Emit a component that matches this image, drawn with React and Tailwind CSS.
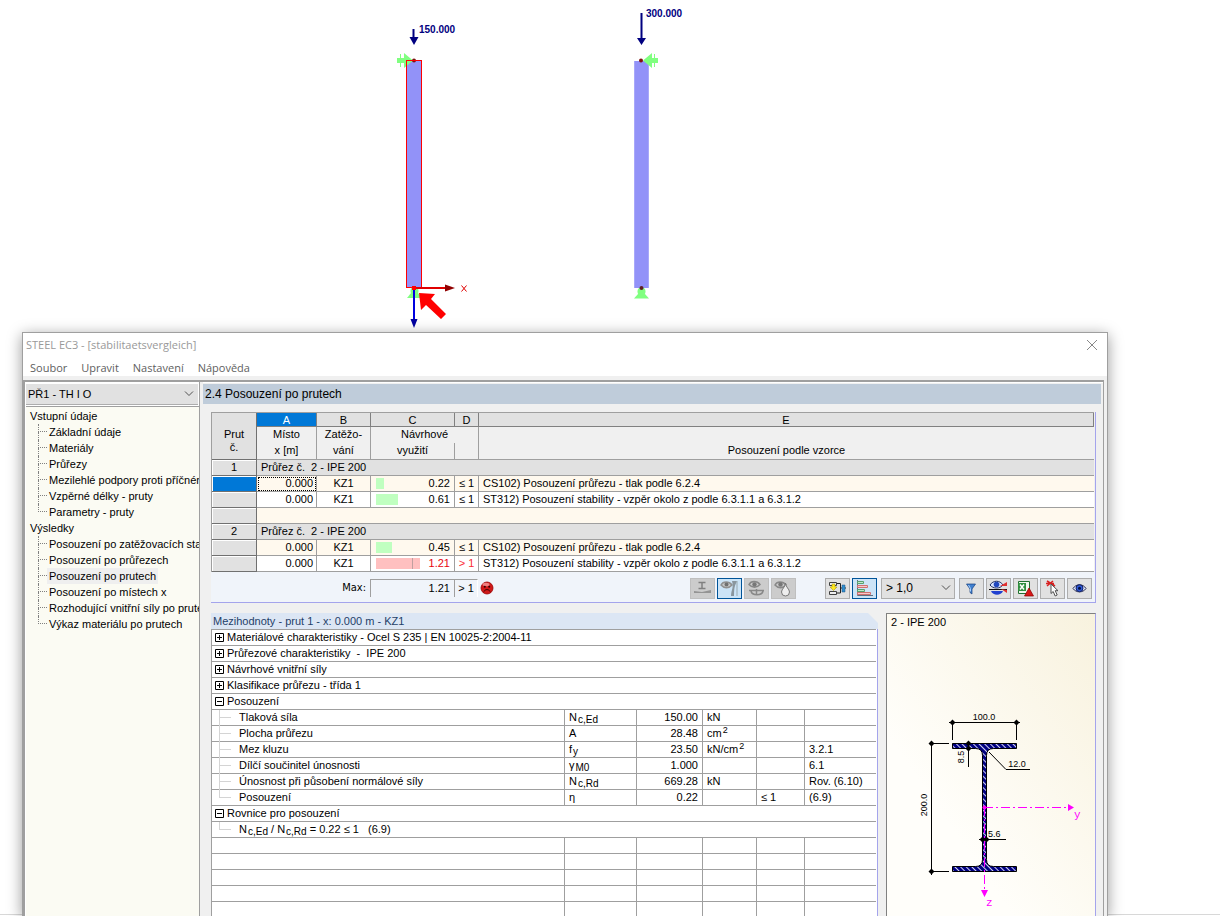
import { useState } from 'react';

const TREE = [
  {
    label: 'Vstupní údaje',
    items: [
      'Základní údaje',
      'Materiály',
      'Průřezy',
      'Mezilehlé podpory proti příčném',
      'Vzpěrné délky - pruty',
      'Parametry - pruty',
    ],
  },
  {
    label: 'Výsledky',
    items: [
      'Posouzení po zatěžovacích stav',
      'Posouzení po průřezech',
      'Posouzení po prutech',
      'Posouzení po místech x',
      'Rozhodující vnitřní síly po prute',
      'Výkaz materiálu po prutech',
    ],
  },
];

const ROWS = [
  { group: '1', title: 'Průřez č.  2 - IPE 200' },
  { x: '0.000', lc: 'KZ1', ratio: 0.22, text: 'CS102) Posouzení průřezu - tlak podle 6.2.4', selected: true },
  { x: '0.000', lc: 'KZ1', ratio: 0.61, text: 'ST312) Posouzení stability - vzpěr okolo z podle 6.3.1.1 a 6.3.1.2' },
  { blank: true },
  { group: '2', title: 'Průřez č.  2 - IPE 200' },
  { x: '0.000', lc: 'KZ1', ratio: 0.45, text: 'CS102) Posouzení průřezu - tlak podle 6.2.4' },
  { x: '0.000', lc: 'KZ1', ratio: 1.21, text: 'ST312) Posouzení stability - vzpěr okolo z podle 6.3.1.1 a 6.3.1.2' },
];

const CLOSED = [
  'Materiálové charakteristiky - Ocel S 235 | EN 10025-2:2004-11',
  'Průřezové charakteristiky  -  IPE 200',
  'Návrhové vnitřní síly',
  'Klasifikace průřezu - třída 1',
];

const VALUES = [
  { name: 'Tlaková síla', sym: 'N', sub: 'c,Ed', value: '150.00', unit: 'kN' },
  { name: 'Plocha průřezu', sym: 'A', value: '28.48', unit: 'cm', sup: '2' },
  { name: 'Mez kluzu', sym: 'f', sub: 'y', value: '23.50', unit: 'kN/cm', sup: '2', ref: '3.2.1' },
  { name: 'Dílčí součinitel únosnosti', sym: 'γ', sub: 'M0', value: '1.000', ref: '6.1' },
  { name: 'Únosnost při působení normálové síly', sym: 'N', sub: 'c,Rd', value: '669.28', unit: 'kN', ref: 'Rov. (6.10)' },
  { name: 'Posouzení', sym: 'η', value: '0.22', cond: '≤ 1', ref: '(6.9)' },
];

function Model() {
  return (
    <svg width="700" height="332" className="block shrink-0" aria-label="Model">
      {/* left member */}
      <rect x="406.500" y="60.500" width="15" height="227" fill="#9292f8" stroke="#ff0000" />
      <g fill="#80ff80">
        <path d="M397 58h7v-5l9 7.500-9 7.500v-5h-7z" />
        <path d="M400 54h1v13h-1z" />
        <path d="M411 293h7l4 5h-15z" />
        <circle cx="414.500" cy="291" r="4" />
      </g>
      <path d="M412.500 29h2v8h4l-4.500 8-4.500-8h3z" fill="#000080" />
      <circle cx="414" cy="60.500" r="2" fill="#801010" />
      <path d="M406 60.500h16M406.500 60v8" stroke="#ff0000" />
      <path d="M415 288h32" stroke="#e00000" strokeWidth="2" />
      <path d="M445 284.500l10 3.500-10 3.500z" fill="#900000" />
      <path d="M414 289v33" stroke="#0000e0" strokeWidth="2" />
      <path d="M410.500 319h7l-3.500 9z" fill="#0000a0" />
      <rect x="412" y="286" width="4" height="4" fill="#ff0000" />
      <path d="M419 293l16 1-4 5 15 15-5 5-15-14-5 5z" fill="#ff0000" />
      <text x="419" y="33" className="fill-[#000080] text-[10px] font-bold">150.000</text>
      <path d="M461.500 285.500l5 6m0-6l-5 6" stroke="#e00000" />

      {/* right member */}
      <rect x="634" y="61" width="15" height="227" fill="#9292f8" />
      <path d="M634.500 61v227m14 0v-227" stroke="#a8a8fa" />
      <g fill="#80ff80">
        <path d="M658 58h-6v-5l-9 7.500 9 7.500v-5h6z" />
        <path d="M654 54h1v13h-1z" />
        <path d="M638 294h7l4 4.500h-15z" />
        <circle cx="641.500" cy="291.500" r="4" />
      </g>
      <circle cx="641" cy="60.500" r="2" fill="#801010" />
      <circle cx="641.500" cy="288" r="2" fill="#602020" />
      <path d="M640.500 13h2v25h3.500l-4.500 7-4.500-7h3.500z" fill="#000080" />
      <text x="646" y="17" className="fill-[#000080] text-[10px] font-bold">300.000</text>
    </svg>
  );
}

/* Branch lines in front of a tree item */
function Branch({ last, dotted }) {
  const line = dotted ? 'border-dotted border-[#808080]' : 'border-[#d4d4d4]';
  return (
    <span className={`flex flex-col shrink-0 h-4 ${dotted ? 'w-[9px]' : 'w-3'}`}>
      <span className={`h-2 border-l border-b ${line}`} />
      <span className={`h-2 ${last ? '' : 'border-l'} ${line}`} />
    </span>
  );
}

function Chevron() {
  return (
    <svg width="10" height="6" viewBox="0 0 10 6" fill="none" stroke="#505050" className="pointer-events-none absolute right-1 top-1/2 -translate-y-1/2">
      <path d="M1 .5l4 4 4-4" />
    </svg>
  );
}

function Sidebar() {
  const [active, setActive] = useState('Posouzení po prutech');
  return (
    <aside className="flex flex-col w-[177px] shrink-0 border-l-2 border-r border-[#9f9f9f] bg-white pt-[2px]">
      <div className="relative mx-px h-[21px] shrink-0 border-b border-[#adadad]">
        <select aria-label="Případ" className="block w-full h-5 appearance-none bg-[#e1e1e1] pl-[2px] pr-5 text-black">
          <option>PŘ1 - TH I O</option>
        </select>
        <Chevron />
      </div>
      <nav className="flex-1 min-h-0 mt-px ml-px pt-px border-t border-[#9f9f9f] bg-[#fbfbf3] overflow-hidden">
        {TREE.map((section) => (
          <div key={section.label}>
            <div className="pl-1 leading-4">{section.label}</div>
            <ul className="pl-3">
              {section.items.map((item, i) => (
                <li key={item} className="flex h-4">
                  <Branch dotted last={i === section.items.length - 1} />
                  <button
                    onClick={() => setActive(item)}
                    className={`px-[2px] leading-4 whitespace-nowrap ${active === item ? 'bg-[#efefef]' : ''}`}
                  >
                    {item}
                  </button>
                </li>
              ))}
            </ul>
          </div>
        ))}
      </nav>
    </aside>
  );
}

function ResultsTable() {
  const letter = 'h-[14px] p-0 font-normal leading-[12px] border-r border-b border-[#808080]';
  const label = 'h-4 p-0 align-top font-normal leading-[14px] bg-[#f0f0f0] border-[#9f9f9f]';
  const label2 = 'h-[17px] p-0 align-top font-normal leading-[15px] border-b bg-[#f0f0f0] border-[#9f9f9f]';
  const rowHead = 'h-4 p-0 font-normal border-r border-b border-[#707070]';
  const cell = 'h-4 py-0 border-r border-b border-[#9f9f9f]';
  return (
    <table className="w-full table-fixed border-separate border-spacing-0 border-t border-l border-[#9f9f9f] leading-[15px]">
      <colgroup>
        <col className="w-[45px]" />
        <col className="w-[60px]" />
        <col className="w-[54px]" />
        <col className="w-[84px]" />
        <col className="w-[24px]" />
        <col />
      </colgroup>
      <thead>
        <tr>
          <th rowSpan={3} className="p-0 pb-[5px] align-bottom font-normal leading-[13px] border-r border-b border-[#707070] bg-[#e1e1e1]">
            Prut<br />č.
          </th>
          <th className={`${letter} bg-[#0078d7] text-white`}>A</th>
          <th className={`${letter} bg-[#e1e1e1]`}>B</th>
          <th className={`${letter} bg-[#e1e1e1]`}>C</th>
          <th className={`${letter} bg-[#e1e1e1]`}>D</th>
          <th className={`${letter} bg-[#e1e1e1]`}>E</th>
        </tr>
        <tr>
          <th className={`${label} border-r`}>Místo</th>
          <th className={`${label} border-r`}>Zatěžo-</th>
          <th colSpan={2} className={`${label} border-r`}>Návrhové</th>
          <th className={label} />
        </tr>
        <tr>
          <th className={`${label2} border-r`}>x [m]</th>
          <th className={`${label2} border-r`}>vání</th>
          <th className={`${label2} border-r`}>využití</th>
          <th className={`${label2} border-r`} />
          <th className={label2}>Posouzení podle vzorce</th>
        </tr>
      </thead>
      <tbody>
        {ROWS.map((row, i) => {
          if (row.blank) {
            return (
              <tr key={i}>
                <th className={`${rowHead} bg-[#e1e1e1] shadow-[inset_1px_1px_0_#fff]`} />
                <td colSpan={5} className="h-4 p-0 border-b border-[#9f9f9f] bg-[#fff9ee]" />
              </tr>
            );
          }
          if (row.group) {
            return (
              <tr key={i}>
                <th className={`${rowHead} bg-[#e1e1e1] shadow-[inset_1px_1px_0_#fff]`}>{row.group}</th>
                <td colSpan={5} className="h-4 py-0 px-1 whitespace-pre border-b border-[#9f9f9f] bg-[#e1e1e1]">{row.title}</td>
              </tr>
            );
          }
          const over = row.ratio > 1;
          return (
            <tr key={i} className={i === 1 || i === 5 ? 'bg-[#fff9ee]' : 'bg-white'}>
              <th className={`${rowHead} shadow-[inset_1px_1px_0_#fff] ${row.selected ? 'bg-[#0078d7]' : 'bg-[#e1e1e1]'}`} />
              <td className={`${cell} pr-[3px] text-right ${row.selected ? 'outline outline-dotted outline-black -outline-offset-2' : ''}`}>{row.x}</td>
              <td className={`${cell} px-0 text-center`}>{row.lc}</td>
              <td className={`${cell} pl-[5px] pr-1`}>
                <div className="flex items-center justify-between">
                  <span className={`flex h-[11px] ${over ? 'bg-[#ffc0c0]' : 'bg-[#c0ffc0]'}`} style={{ width: Math.round(row.ratio * 36) }}>
                    {over && <span className="ml-9 w-px bg-[#c0a0a0]" />}
                  </span>
                  <span className={over ? 'text-red-600' : ''}>{row.ratio.toFixed(2)}</span>
                </div>
              </td>
              <td className={`${cell} px-0 text-center ${over ? 'text-red-500' : ''}`}>{over ? '> 1' : '≤ 1'}</td>
              <td className="h-4 py-0 px-1 whitespace-nowrap border-b border-[#9f9f9f]">{row.text}</td>
            </tr>
          );
        })}
      </tbody>
    </table>
  );
}

function ToolButton({ label, state, children }) {
  const style = {
    disabled: 'bg-[#cccccc] border-[#bfbfbf]',
    on: 'bg-[#cce4f7] border-[#005499]',
  }[state] || 'bg-[#e1e1e1] border-[#adadad]';
  return (
    <button aria-label={label} disabled={state === 'disabled'} className={`flex items-center justify-center w-[25px] h-[21px] shrink-0 border ${style}`}>
      <svg width="19" height="17" viewBox="0 0 19 17" fill="none">{children}</svg>
    </button>
  );
}

function Toolbar() {
  return (
    <div className="flex items-center">
      <div className="flex gap-[2px]">
        <ToolButton label="Profil" state="disabled">
          <path d="M5.500 2.500h7M9 3v6M5.500 8.500h7" stroke="#808080" strokeWidth="1.500" />
          <path d="M1 13v-2l8 1 9-2v3z" fill="#949494" />
        </ToolButton>
        <ToolButton label="Návrh" state="on">
          <path d="M1 5c2-4 8-4 11 0-3 3.500-8 3.500-11 0z" stroke="#909090" strokeWidth="1.500" fill="#c8c8c8" />
          <circle cx="6.500" cy="4.500" r="2" fill="#707070" />
          <path d="M12 1h5c-2 5-3 5-3 15h-3c0-6 3-8 1-15z" fill="#8a969e" />
          <path d="M17 1v15" stroke="#98a8b0" />
        </ToolButton>
        <ToolButton label="Řezy" state="disabled">
          <path d="M2 4.500c2-4 8-4 11 0-3 3.500-8 3.500-11 0z" stroke="#888" strokeWidth="1.500" />
          <circle cx="7.500" cy="4.500" r="2.200" fill="#777" />
          <path d="M2 10.500h15M4 11c1 5 11 5 12 0M9.500 9v5" stroke="#888" strokeWidth="1.500" />
        </ToolButton>
        <ToolButton label="Barvy" state="disabled">
          <path d="M1 5c2-4 8-4 11 0-3 3.500-8 3.500-11 0z" stroke="#888" strokeWidth="1.500" />
          <circle cx="6.500" cy="4.500" r="2.200" fill="#777" />
          <path d="M11.500 3c0 4-4 6-4 9a4 4 0 0 0 8 0c0-3-4-5-4-9z" fill="#eee" stroke="#777" />
        </ToolButton>
      </div>
      <div className="flex gap-[2px] ml-[29px]">
        <ToolButton label="Propojení">
          <path d="M1.500 2.500h7v3h-7zM1.500 11.500h7v3h-7z" stroke="#404040" fill="#eee" />
          <path d="M4 4h3v3h2l-3.500 3.500L2 7h2z" fill="#ffe820" stroke="#a09000" strokeWidth=".5" />
          <path d="M9 3.500h3.500v9.500H9M12 8h6" stroke="#202020" />
          <path d="M14 5h3v7h-3z" fill="#3090d0" stroke="#205080" strokeWidth=".5" />
        </ToolButton>
        <ToolButton label="Sloupce využití" state="on">
          <path d="M2.500 0v15.500H18" stroke="#607080" />
          <path d="M2.500 1.500h6v2h-6z" stroke="#58a070" fill="#c0e8c8" />
          <path d="M2.500 5.500h10v2h-10z" stroke="#d07070" fill="#f8c8c8" />
          <path d="M2.500 9.500h7v2h-7z" stroke="#58a070" fill="#c0e8c8" />
          <path d="M2.500 12.500h13v2h-13z" stroke="#d07070" fill="#f8c8c8" />
        </ToolButton>
      </div>
      <div className="relative ml-1 w-[74px] h-[21px]">
        <select aria-label="Filtr využití" className="block w-full h-full appearance-none border border-[#adadad] bg-[#e1e1e1] pl-1 text-xs text-black">
          <option>&gt; 1,0</option>
        </select>
        <Chevron />
      </div>
      <div className="flex gap-[2px] ml-1">
        <ToolButton label="Filtr">
          <path d="M4.500 4h9l-3.500 5v5l-2-1.500V9z" fill="#4080d0" stroke="#184080" strokeWidth=".7" />
          <path d="M6.500 5l2 3.500v3" stroke="#a8d0ff" />
        </ToolButton>
        <ToolButton label="Barevná stupnice">
          <path d="M1 5c3-5 10-5 13 0-3 4-10 4-13 0z" fill="#d8e4ff" stroke="#203060" />
          <circle cx="7.500" cy="4.500" r="2.800" fill="#2048c0" />
          <path d="M0 9.500h18" stroke="#101010" />
          <path d="M2 11h12c-2 5-10 5-12 0z" fill="#2040d0" />
          <path d="M11 6l7-4v4zM12 9l6 1v3z" fill="#e03030" />
        </ToolButton>
        <ToolButton label="Export do Excelu">
          <path d="M2.500 1.500h11v12h-11z" fill="#f0f8f0" stroke="#207030" />
          <path d="M2 3h8v8H2z" fill="#309040" />
          <path d="M4 4.500l4 5m0-5l-4 5" stroke="#fff" strokeWidth="1.500" />
          <path d="M13 8l4.500 8h-9z" fill="#d81818" stroke="#800" strokeWidth=".7" />
        </ToolButton>
        <ToolButton label="Výběr prvku">
          <path d="M4 1l8 5M4 6l6-5M3 3.500h8" stroke="#d82020" strokeWidth="1.500" />
          <path d="M8 4v9.500l2.200-2 2 4.500 2-1-2-4.300h2.800z" fill="#fff" stroke="#505050" />
        </ToolButton>
        <ToolButton label="Zobrazit">
          <path d="M3 8.500c3-5 10-5 13 0-3 4.500-10 4.500-13 0z" fill="#dde6ff" stroke="#303050" />
          <circle cx="9.500" cy="8.200" r="3.500" fill="#3058d8" stroke="#102060" />
          <circle cx="9.500" cy="8.200" r="1.500" fill="#001040" />
        </ToolButton>
      </div>
    </div>
  );
}

function SummaryBar() {
  return (
    <div className="flex items-center h-[31px] pt-[2px] border-b border-[#a4a4ec] bg-[#f0f4fa] pr-[3px]">
      <span className="w-[155px] text-right font-[DejaVu_Sans_Condensed,Liberation_Sans,sans-serif]">Max:</span>
      <span className="ml-1 w-[84px] h-[18px] pr-1 text-right leading-[17px] border-t border-l border-[#9f9f9f]">1.21</span>
      <span className="w-[24px] h-[18px] text-center leading-[17px] border-t border-l border-r border-[#9f9f9f] border-r-white">&gt; 1</span>
      <svg width="14" height="14" viewBox="0 0 14 14" className="ml-[2px]">
        <circle cx="7" cy="7" r="6" fill="#d01818" stroke="#900" strokeWidth=".8" />
        <ellipse cx="6" cy="3.500" rx="3.500" ry="1.800" fill="#f08080" />
        <circle cx="4.800" cy="5.800" r="1" fill="#300" />
        <circle cx="9.200" cy="5.800" r="1" fill="#300" />
        <path d="M4 10.500c1-2.500 5-2.500 6 0" stroke="#300" fill="none" />
      </svg>
      <div className="ml-auto">
        <Toolbar />
      </div>
    </div>
  );
}

function Toggle({ open }) {
  return (
    <svg width="9" height="9" viewBox="0 0 9 9" fill="none" stroke="#000" className="shrink-0">
      <path d="M.5 .5h8v8h-8zM2 4.500h5" />
      {!open && <path d="M4.500 2v5" />}
    </svg>
  );
}

function HeaderRow({ open, children }) {
  return (
    <tr>
      <td colSpan={6} className="h-4 p-0 border-b border-[#9f9f9f]">
        <button className="flex items-center gap-[3px] pl-[3px] leading-[15px] whitespace-pre">
          <Toggle open={open} />
          {children}
        </button>
      </td>
    </tr>
  );
}

function Sub({ children }) {
  return <span className="inline-block pl-px translate-y-[2px] text-[10px] leading-none">{children}</span>;
}

function Details() {
  const cell = 'h-4 py-0 px-1 border-r border-b border-[#9f9f9f] whitespace-nowrap';
  const last = 'h-4 py-0 px-1 border-b border-[#9f9f9f] whitespace-nowrap';
  return (
    <section className="flex-1 min-w-0 flex flex-col overflow-hidden">
      <h2 className="h-4 shrink-0 pl-[2px] leading-4 bg-[#dce6f4] text-[#1f4068] [clip-path:polygon(0_0,calc(100%-10px)_0,100%_10px,100%_100%,0_100%)]">
        Mezihodnoty - prut 1 - x: 0.000 m - KZ1
      </h2>
      <div className="flex-1 min-h-0 overflow-hidden bg-white border-r border-[#a4a4ec] pr-px">
        <table className="w-full table-fixed border-separate border-spacing-0 border-t border-l border-[#9f9f9f] leading-[15px]">
          <colgroup>
            <col />
            <col className="w-[72px]" />
            <col className="w-[66px]" />
            <col className="w-[54px]" />
            <col className="w-[48px]" />
            <col className="w-[71px]" />
          </colgroup>
          <tbody>
            {CLOSED.map((text) => (
              <HeaderRow key={text}>{text}</HeaderRow>
            ))}
            <HeaderRow open>Posouzení</HeaderRow>
            {VALUES.map((v, i) => (
              <tr key={v.name}>
                <td className="h-4 py-0 pl-[7px] border-r border-b border-[#9f9f9f]">
                  <div className="flex h-[15px]">
                    <Branch last={i === VALUES.length - 1} />
                    <span className="pl-2">{v.name}</span>
                  </div>
                </td>
                <td className={cell}>{v.sym}{v.sub && <Sub>{v.sub}</Sub>}</td>
                <td className={`${cell} text-right`}>{v.value}</td>
                <td className={cell}>{v.unit}{v.sup && <sup className="pl-px text-[9px] leading-none">{v.sup}</sup>}</td>
                <td className={cell}>{v.cond}</td>
                <td className={last}>{v.ref}</td>
              </tr>
            ))}
            <HeaderRow open>Rovnice pro posouzení</HeaderRow>
            <tr>
              <td colSpan={6} className="h-4 py-0 pl-[7px] border-b border-[#9f9f9f]">
                <div className="flex h-[15px]">
                  <Branch last />
                  <span className="pl-2 whitespace-pre">
                    N<Sub>c,Ed</Sub> / N<Sub>c,Rd</Sub> = 0.22 ≤ 1   (6.9)
                  </span>
                </div>
              </td>
            </tr>
            {[0, 1, 2, 3, 4].map((r) => (
              <tr key={r}>
                {[0, 1, 2, 3, 4].map((c) => <td key={c} className={cell} />)}
                <td className={last} />
              </tr>
            ))}
          </tbody>
        </table>
      </div>
    </section>
  );
}

function CrossSection() {
  return (
    <section className="w-[210px] shrink-0 overflow-hidden border-t border-l border-r border-[#808080] border-r-[#a4a4ec] bg-linear-to-bl from-[#f8f2de] to-[#fffefa] to-70%">
      <h2 className="h-4 pl-1 leading-4">2 - IPE 200</h2>
      <svg width="208" height="290" viewBox="0 0 208 290" fill="none">
        <defs>
          <pattern id="hatch" width="4" height="4" patternUnits="userSpaceOnUse" patternTransform="rotate(-45)">
            <rect width="4" height="4" fill="#000080" />
            <path d="M.5 0v4" stroke="#d0d0f0" />
          </pattern>
        </defs>
        <path
          d="M65.500 113.500h64v5h-23q-7 0-7 7v104q0 7 7 7h23v5h-64v-5h23q7 0 7-7v-104q0-7-7-7h-23z"
          fill="url(#hatch)"
          stroke="#000"
        />
        <g stroke="#000">
          <path d="M62 92.500h71M65.500 90v20M129.500 90v20" />
          <path d="M44.500 111v134M42 113.500h20M42 241.500h20" />
          <path d="M81.500 111v26M92 209.500h27" />
          <path d="M102 122l17 17.500h24" />
        </g>
        <path
          d="M65.500 89.500l3 3-3 3-3-3zM129.500 89.500l3 3-3 3-3-3zM44.500 110.500l3 3-3 3-3-3zM44.500 238.500l3 3-3 3-3-3zM81.500 110.500l3 3-3 3-3-3zM81.500 115.500l3 3-3 3-3-3zM95.500 206.500l3 3-3 3-3-3zM99.500 206.500l3 3-3 3-3-3z"
          fill="#000"
        />
        <g stroke="#ff00ff" strokeDasharray="9 3 2 3">
          <path d="M97 177.500h86" />
          <path d="M97.500 177v85" />
        </g>
        <path d="M181 174l6 3.500-6 3.500zM94 260h7l-3.500 7z" fill="#ff00ff" />
        <circle cx="97.500" cy="177.500" r="2" fill="#ff00ff" />
        <g className="fill-black text-[9px]">
          <text x="97" y="90" textAnchor="middle">100.0</text>
          <text x="130" y="137" textAnchor="middle">12.0</text>
          <text x="101" y="207">5.6</text>
          <text transform="translate(40 175) rotate(-90)" textAnchor="middle">200.0</text>
          <text transform="translate(77 127) rotate(-90)" textAnchor="middle">8.5</text>
        </g>
        <g fontFamily="Liberation Mono, monospace" className="fill-[#ff00ff] text-[11px]">
          <text x="187" y="188">y</text>
          <text x="99" y="276">z</text>
        </g>
      </svg>
    </section>
  );
}

export default function App() {
  return (
    <div className="relative flex flex-col h-screen overflow-hidden bg-white font-[Liberation_Sans,Arial,sans-serif] text-[11px] text-black">
      <div className="absolute inset-x-0 bottom-px h-px bg-[#d8d8d8]" />
      <Model />
      <div className="relative flex flex-col flex-1 min-h-0 ml-[22px] mr-28 border border-b-0 border-[#9f9f9f] bg-white shadow-[0_3px_14px_rgba(0,0,0,0.4)]">
        <header className="flex items-center justify-between h-6 shrink-0 pl-[3px] pr-[9px] font-[Open_Sans,sans-serif]">
          <h1 className="text-[11px] text-[#999]">STEEL EC3 - [stabilitaetsvergleich]</h1>
          <button aria-label="Zavřít">
            <svg width="12" height="12" viewBox="0 0 12 12" stroke="#888"><path d="M1 1l10 10M11 1L1 11" /></svg>
          </button>
        </header>
        <nav className="flex items-center gap-[14px] h-[19px] pt-[3px] shrink-0 pl-[7px] font-[Open_Sans,sans-serif] text-[11px] text-[#606060]">
          <button>Soubor</button>
          <button>Upravit</button>
          <button>Nastavení</button>
          <button>Nápověda</button>
        </nav>
        <div className="flex flex-1 min-h-0 bg-[#f0f0f0] pt-1 pr-[3px]">
          <div className="flex flex-1 min-h-0 min-w-0 border-t-2 border-r border-[#9f9f9f]">
            <Sidebar />
            <main className="flex-1 min-w-0 flex flex-col ml-[3px] pt-px pr-[2px] border-t border-white">
              <h2 className="h-5 shrink-0 pl-[2px] text-xs leading-5 bg-[#bfccda]">2.4 Posouzení po prutech</h2>
              <div className="flex-1 min-h-0 flex flex-col pt-2 pl-2 pr-[5px]">
                <div className="shrink-0 border-r border-[#a4a4ec]">
                  <div className="pr-px"><ResultsTable /></div>
                  <SummaryBar />
                </div>
                <div className="flex flex-1 min-h-0 gap-2 mt-[10px]">
                  <Details />
                  <CrossSection />
                </div>
              </div>
            </main>
          </div>
        </div>
      </div>
    </div>
  );
}
